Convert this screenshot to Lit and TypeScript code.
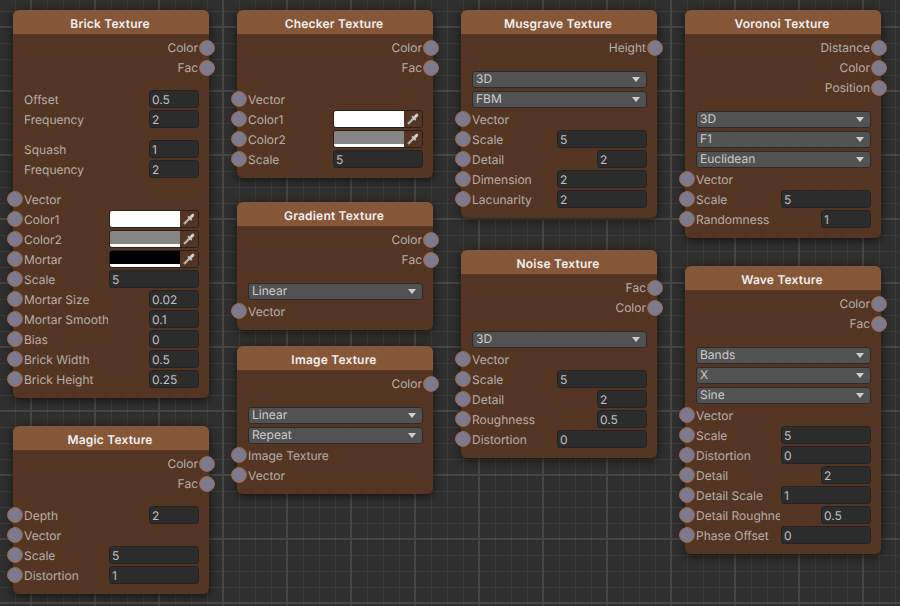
import { LitElement, html, css, svg, nothing } from "lit";
import { customElement } from "lit/decorators.js";

type Row =
  | { k: "out"; t: string }
  | { k: "gap"; h: number }
  | { k: "in"; t: string; port?: boolean; v?: string; narrow?: boolean; color?: string }
  | { k: "drop"; t: string };

interface NodeDef { title: string; x: number; y: number; rows: Row[] }

const out = (t: string): Row => ({ k: "out", t });
const gap = (h = 12): Row => ({ k: "gap", h });
const drop = (t: string): Row => ({ k: "drop", t });
const plain = (t: string): Row => ({ k: "in", t, port: true });
const wide = (t: string, v: string): Row => ({ k: "in", t, port: true, v });
const nar = (t: string, v: string): Row => ({ k: "in", t, port: true, v, narrow: true });
const free = (t: string, v: string): Row => ({ k: "in", t, v, narrow: true });
const col = (t: string, color: string): Row => ({ k: "in", t, port: true, color });

const NODES: NodeDef[] = [
  { title: "Brick Texture", x: 13, y: 10, rows: [
    out("Color"), out("Fac"), gap(),
    free("Offset", "0.5"), free("Frequency", "2"), gap(10),
    free("Squash", "1"), free("Frequency", "2"), gap(10),
    plain("Vector"), col("Color1", "#ffffff"), col("Color2", "#858585"), col("Mortar", "#000000"),
    wide("Scale", "5"), nar("Mortar Size", "0.02"), nar("Mortar Smooth", "0.1"), nar("Bias", "0"),
    nar("Brick Width", "0.5"), nar("Brick Height", "0.25"),
  ]},
  { title: "Magic Texture", x: 13, y: 426, rows: [
    out("Color"), out("Fac"), gap(),
    nar("Depth", "2"), plain("Vector"), wide("Scale", "5"), wide("Distortion", "1"),
  ]},
  { title: "Checker Texture", x: 237, y: 10, rows: [
    out("Color"), out("Fac"), gap(),
    plain("Vector"), col("Color1", "#ffffff"), col("Color2", "#858585"), wide("Scale", "5"),
  ]},
  { title: "Gradient Texture", x: 237, y: 202, rows: [
    out("Color"), out("Fac"), gap(), drop("Linear"), plain("Vector"),
  ]},
  { title: "Image Texture", x: 237, y: 346, rows: [
    out("Color"), gap(), drop("Linear"), drop("Repeat"), plain("Image Texture"), plain("Vector"),
  ]},
  { title: "Musgrave Texture", x: 461, y: 10, rows: [
    out("Height"), gap(), drop("3D"), drop("FBM"),
    plain("Vector"), wide("Scale", "5"), nar("Detail", "2"), wide("Dimension", "2"), wide("Lacunarity", "2"),
  ]},
  { title: "Noise Texture", x: 461, y: 250, rows: [
    out("Fac"), out("Color"), gap(), drop("3D"),
    plain("Vector"), wide("Scale", "5"), nar("Detail", "2"), nar("Roughness", "0.5"), wide("Distortion", "0"),
  ]},
  { title: "Voronoi Texture", x: 685, y: 10, rows: [
    out("Distance"), out("Color"), out("Position"), gap(),
    drop("3D"), drop("F1"), drop("Euclidean"),
    plain("Vector"), wide("Scale", "5"), nar("Randomness", "1"),
  ]},
  { title: "Wave Texture", x: 685, y: 266, rows: [
    out("Color"), out("Fac"), gap(),
    drop("Bands"), drop("X"), drop("Sine"),
    plain("Vector"), wide("Scale", "5"), wide("Distortion", "0"), nar("Detail", "2"),
    wide("Detail Scale", "1"), nar("Detail Roughness", "0.5"), wide("Phase Offset", "0"),
  ]},
];

const dropper = svg`<svg class="dropper" viewBox="0 0 12 12" width="12" height="12" fill="none" stroke-linecap="butt">
  <path d="M1 11 L6.6 5.4" stroke="#b4b4b4" stroke-width="2.2"/>
  <path d="M4.8 3.2 L8.8 7.2" stroke="#c6c6c6" stroke-width="1.4"/>
  <path d="M7 5 L9.8 2.2" stroke="#cfcfcf" stroke-width="3" stroke-linecap="round"/>
</svg>`;

@customElement("app-root")
export class AppRoot extends LitElement {
  static styles = css`
    :host {
      display: block;
      width: 900px;
      height: 606px;
      font-family: Inter, "Noto Sans", sans-serif;
      font-size: 12px;
      text-rendering: geometricPrecision;
    }
    .canvas {
      position: relative;
      width: 900px;
      height: 606px;
      overflow: hidden;
      background-color: #2f2f2f;
      background-image:
        linear-gradient(to right, #464646 2px, transparent 2px),
        linear-gradient(to bottom, #464646 2px, transparent 2px),
        linear-gradient(to right, #3b3b3b 1px, transparent 1px),
        linear-gradient(to bottom, #3b3b3b 1px, transparent 1px);
      background-size: 64px 64px, 64px 64px, 16px 16px, 16px 16px;
      background-position: 30px 0, 0 26px, 15px 0, 0 11px;
    }
    .node {
      position: absolute;
      width: 196px;
      box-sizing: border-box;
      border-radius: 6px;
      background: rgba(86, 54, 36, 0.95);
      box-shadow: 0 2px 10px rgba(0, 0, 0, 0.6);
      padding-bottom: 8px;
    }
    .head {
      height: 24px;
      line-height: 27px;
      text-align: center;
      font-weight: 600;
      letter-spacing: 0.2px;
      color: #f0f0f0;
      background: rgba(136, 87, 57, 0.96);
      border-radius: 6px 6px 0 0;
      margin-bottom: 4px;
      padding-right: 2px;
    }
    .row {
      position: relative;
      height: 20px;
      display: flex;
      align-items: flex-start;
      padding: 0 10px 0 11px;
      color: #b6afa9;
      line-height: 20px;
    }
    .row.out {
      justify-content: flex-end;
      padding-right: 11px;
    }
    .label {
      width: 84px;
      flex: none;
      overflow: hidden;
      white-space: nowrap;
    }
    .port {
      position: absolute;
      width: 16px;
      height: 16px;
      box-sizing: border-box;
      border-radius: 50%;
      background: #7c7a8c;
      border: 1px solid #9c6440;
    }
    .row.in .port { left: -6px; top: 0.5px; }
    .row.out .port { right: -6px; top: 2px; }
    .field {
      margin-left: auto;
      box-sizing: border-box;
      height: 18px;
      width: 90px;
      flex: none;
      border-radius: 3px;
      border: 1px solid #232323;
      background: #2c2c2c;
      color: #c0c0c0;
      line-height: 18px;
      padding-left: 2px;
    }
    .field.narrow { width: 50px; }
    .color {
      margin-left: auto;
      box-sizing: border-box;
      height: 18px;
      width: 90px;
      flex: none;
      display: flex;
      border-radius: 3px;
      border: 1px solid #2b2118;
      overflow: hidden;
    }
    .swatch {
      width: 70px;
      flex: none;
      display: flex;
      flex-direction: column;
    }
    .swatch .fill { flex: 1; }
    .swatch .alpha { height: 3px; background: #fff; }
    .pick {
      flex: 1;
      display: flex;
      align-items: center;
      justify-content: center;
    }
    .dropper { display: block; }
    .select {
      box-sizing: border-box;
      width: 175px;
      height: 17px;
      margin-top: 1px;
      padding: 0 6px 1px 3px;
      flex: none;
      display: flex;
      align-items: center;
      justify-content: space-between;
      border: 1px solid #2b2b2b;
      border-radius: 3px;
      background: #525252;
      color: #cccccc;
    }
    .caret {
      width: 0;
      height: 0;
      border-left: 4px solid transparent;
      border-right: 4px solid transparent;
      border-top: 5px solid #cfcfcf;
    }
  `;

  private renderRow(r: Row) {
    switch (r.k) {
      case "gap":
        return html`<div style="height:${r.h}px"></div>`;
      case "out":
        return html`<div class="row out"><span>${r.t}</span><span class="port"></span></div>`;
      case "drop":
        return html`<div class="row"><div class="select"><span>${r.t}</span><span class="caret"></span></div></div>`;
      case "in":
        return html`<div class="row in">
          ${r.port ? html`<span class="port"></span>` : nothing}
          <span class="label">${r.t}</span>
          ${r.v !== undefined ? html`<div class="field ${r.narrow ? "narrow" : ""}">${r.v}</div>` : nothing}
          ${r.color ? html`<div class="color">
            <div class="swatch"><div class="fill" style="background:${r.color}"></div><div class="alpha"></div></div>
            <div class="pick">${dropper}</div>
          </div>` : nothing}
        </div>`;
    }
  }

  render() {
    return html`<div class="canvas">
      ${NODES.map(n => html`<section class="node" style="left:${n.x}px;top:${n.y}px">
        <div class="head">${n.title}</div>
        ${n.rows.map(r => this.renderRow(r))}
      </section>`)}
    </div>`;
  }
}
